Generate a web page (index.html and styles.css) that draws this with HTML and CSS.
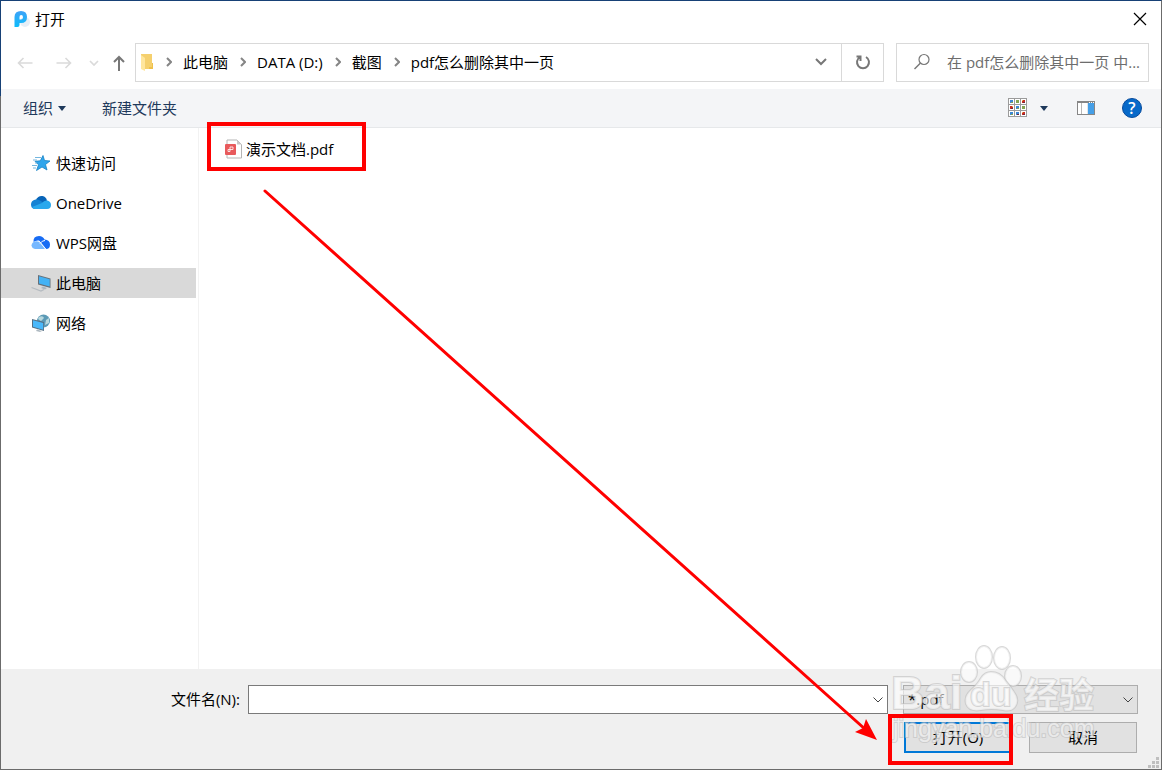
FILE: index.html
```html
<!DOCTYPE html>
<html lang="zh-CN">
<head>
<meta charset="utf-8">
<title>打开</title>
<link rel="stylesheet" href="styles.css">
</head>
<body>
<main class="dialog">
  <header class="titlebar">
    <svg class="logo" width="18" height="20" viewBox="0 0 18 20"><defs><linearGradient id="lg" x1="0" y1="0" x2="0" y2="1"><stop offset="0" stop-color="#3fa2f7"/><stop offset="1" stop-color="#0cbcfb"/></linearGradient></defs><circle cx="12" cy="13" r="5" fill="#e6eef6"/><path fill="url(#lg)" fill-rule="evenodd" d="M1.500 8Q1.500 2 8 2Q14 2 14 8Q14 14 8 14H6.500V16Q6.500 18 4.500 18H1.500ZM6.500 10.500H8Q10 10.500 10 8.200Q10 6 8.200 6Q6.500 6 6.500 8Z"/></svg>
    <h1 class="title">打开</h1>
    <button class="close" aria-label="关闭"><svg width="14" height="14" viewBox="0 0 14 14"><path d="M1 1L13 13M13 1L1 13" stroke="#000" stroke-width="1.200"/></svg></button>
  </header>

  <nav class="navrow">
    <div class="history">
      <button class="icon-btn back" aria-label="后退"><svg width="16" height="12" viewBox="0 0 16 12"><path d="M15.500 6H1.500M6.500 1L1.500 6L6.500 11" fill="none" stroke="#dadada" stroke-width="1.600"/></svg></button>
      <button class="icon-btn forward" aria-label="前进"><svg width="16" height="12" viewBox="0 0 16 12"><path d="M0.500 6H14.500M9.500 1L14.500 6L9.500 11" fill="none" stroke="#dadada" stroke-width="1.600"/></svg></button>
      <button class="icon-btn recent" aria-label="最近位置"><svg width="10" height="6" viewBox="0 0 10 6"><path d="M1 1L5 5L9 1" fill="none" stroke="#dadada" stroke-width="1.700"/></svg></button>
      <button class="icon-btn up" aria-label="上移"><svg width="14" height="16" viewBox="0 0 14 16"><path d="M7 16V2M2 7L7 2L12 7" fill="none" stroke="#777" stroke-width="2"/></svg></button>
    </div>
    <div class="address">
      <svg class="folder" width="14" height="18" viewBox="0 0 14 18"><path d="M1 1H12V10H13V16H1Z" fill="#f5d06e"/><path d="M12 10H13V16H9V14H12Z" fill="#efc14c"/><path d="M1 2L5 5V18L1 16Z" fill="#ffe69d"/></svg>
      <svg class="sep" width="6" height="10" viewBox="0 0 6 10"><path d="M1 1L5 5L1 9"/></svg>
      <a class="crumb" href="#pc">此电脑</a>
      <svg class="sep" width="6" height="10" viewBox="0 0 6 10"><path d="M1 1L5 5L1 9"/></svg>
      <a class="crumb" href="#data">DATA (D:)</a>
      <svg class="sep" width="6" height="10" viewBox="0 0 6 10"><path d="M1 1L5 5L1 9"/></svg>
      <a class="crumb" href="#shots">截图</a>
      <svg class="sep" width="6" height="10" viewBox="0 0 6 10"><path d="M1 1L5 5L1 9"/></svg>
      <a class="crumb" href="#folder">pdf怎么删除其中一页</a>
      <button class="drop" aria-label="以前的位置"><svg width="12" height="8" viewBox="0 0 12 8"><path d="M1 1L6 6L11 1" fill="none" stroke="#777" stroke-width="2"/></svg></button>
      <button class="refresh" aria-label="刷新"><svg width="16" height="16" viewBox="0 0 16 16"><path d="M11 3A6 6 0 1 1 5 3M1.500 2.500H5.500V7" fill="none" stroke="#777" stroke-width="2"/></svg></button>
    </div>
    <div class="search">
      <svg width="18" height="18" viewBox="0 0 18 18"><circle cx="11" cy="6.500" r="5" fill="none" stroke="#777" stroke-width="1.200"/><path d="M7.500 10L1.500 16" stroke="#777" stroke-width="1.400"/></svg>
      <input class="search-input" type="text" aria-label="搜索" placeholder="在 pdf怎么删除其中一页 中...">
    </div>
  </nav>

  <section class="toolbar">
    <button class="tool">组织<svg width="8" height="5" viewBox="0 0 8 5"><path d="M0 0H8L4 5Z" fill="#1e395b"/></svg></button>
    <button class="tool">新建文件夹</button>
    <div class="views">
      <button class="icon-btn view" aria-label="更改视图"><svg width="20" height="20" viewBox="0 0 20 20" shape-rendering="crispEdges"><path d="M0.500 0.500H18.500V18.500H0.500ZM6.500 0V19M12.500 0V19M0 6.500H19M0 12.500H19" fill="#fff" stroke="#9b9b9b"/><path fill="#3d87d3" d="M2 2h3v3H2zM8 8h3v3H8zM2 14h3v3H2zM8 14h3v3H8z"/><path fill="#83a551" d="M8 2h3v3H8zM14 8h3v3h-3zM3 4h2v1H3zM9 10h2v1H9zM3 16h2v1H3z"/><path fill="#c92d20" d="M14 2h3v3h-3zM2 8h3v3H2zM14 14h3v3h-3z"/><path fill="#e8b45d" d="M14 2h1v1h-1zM4 8h1v1H4zM14 14h1v1h-1z"/><path fill="#6d263d" d="M15 4h2v1h-2zM3 10h2v1H3zM15 16h2v1h-2zM9 16h2v1H9z"/></svg></button>
      <button class="icon-btn view-more" aria-label="更多选项"><svg width="8" height="5" viewBox="0 0 8 5"><path d="M0 0H8L4 5Z" fill="#1e395b"/></svg></button>
      <button class="icon-btn pane" aria-label="显示预览窗格"><svg width="18" height="14" viewBox="0 0 18 14" shape-rendering="crispEdges"><path d="M0 0H18V14H0Z" fill="#868686"/><path d="M1 2H10V13H1Z" fill="#fff"/><path d="M4 2H5V13H4Z" fill="#b8b8b8"/><path d="M10 2H11V13H10Z" fill="#dfe6ec"/><path d="M11 2H17V13H11Z" fill="#459fe7"/><path d="M12 1h1v1h-1zM14 1h1v1h-1zM16 1h1v1h-1z" fill="#fff"/></svg></button>
      <button class="icon-btn help" aria-label="帮助">?</button>
    </div>
  </section>

  <div class="body">
    <nav class="sidebar">
      <a class="place" href="#quick"><svg width="20" height="18" viewBox="0 0 20 18"><path d="M12 1.500L13.500 6.500L19 7L14.500 10.500L16 16L11 13L5.500 16.500L7.500 10.800L4 7.300L9.300 6.800Z" fill="#2ea5ec" stroke="#1681c4" stroke-width=".8"/><path d="M4 3.500H10M2 6H6M4 9H6M1 11.500H6M2 14H5" stroke="#74b6df" stroke-width="1"/></svg>快速访问</a>
      <a class="place" href="#onedrive"><svg width="20" height="18" viewBox="0 0 20 18"><path d="M5 6Q7 1.500 11.500 2Q15 2.500 16 6.500L10 11Z" fill="#0864b8"/><path d="M4.500 5.500Q7 5.200 9 6.500L15 10.500L3 15Q0 14 0 10.500Q0 6.500 4.500 5.500Z" fill="#1583d4"/><path d="M11 9Q13 6 16.500 6.500Q20 7.500 20 11Q20 15 16 15H4Q2 15 1 13Z" fill="#29a8ed"/></svg>OneDrive</a>
      <a class="place" href="#wps"><svg width="20" height="18" viewBox="0 0 20 18"><path d="M2.500 8Q2 2 8 2Q12 2 13.500 5.500Q19 6 19 10.500Q19 15 15 15L8 6.500Q5 6 2.500 8Z" fill="#176cf4"/><path d="M0.500 11.500Q1 7.500 5 7.200Q8 7 9.500 9L14 15H4Q1 14.500 0.500 11.500Z" fill="#76b8ff"/><path d="M9 9.500Q11 6.500 14 6.500" fill="none" stroke="#fff" stroke-width="1"/><path d="M8 7L14.800 15" stroke="#fff" stroke-width=".8"/></svg>WPS网盘</a>
      <a class="place current" href="#pc"><svg width="20" height="18" viewBox="0 0 20 18"><path d="M7 1L19.500 4.500V14L7 10.500Z" fill="#65707a"/><path d="M8 2.200L18.700 5.200V12.600L8 9.600Z" fill="#43b2f5"/><path d="M12 12.500L16 14L14 15.500L10 14Z" fill="#a9b5bf"/><path d="M0.500 13.500L10 17L13 15.500" fill="none" stroke="#b4bac0" stroke-width="1.200"/></svg>此电脑</a>
      <a class="place" href="#network"><svg width="20" height="18" viewBox="0 0 20 18"><circle cx="12.500" cy="7" r="6.500" fill="#5c9ab6"/><path d="M8 3Q12 1 13 4L10 7L7 5ZM15 6L18 4V9L14 11Z" fill="#b8d8de"/><path d="M1 5L13 8V17L1 13.500Z" fill="#556f83"/><path d="M2 6.300L12.200 8.900V15.800L2 12.800Z" fill="#49b8fa"/><path d="M6 15.500L11 17L9 18L5 17Z" fill="#adb8c0"/></svg>网络</a>
    </nav>
    <section class="files">
      <button class="file"><svg width="18" height="20" viewBox="0 0 18 20"><path d="M2 1H12L16.500 5.500V19H2Z" fill="#fff" stroke="#b5b5b5"/><path d="M12 1V5.500H16.500Z" fill="#c9c9c9"/><rect x="0" y="5" width="11" height="11" rx="1" fill="#e85a5c"/><path d="M3 10.500V12.500H5V8H8V10.500H3" fill="none" stroke="#fff" stroke-width=".8"/></svg>演示文档.pdf</button>
    </section>
  </div>

  <footer class="footer">
    <div class="fields">
      <label class="name-label" for="fname">文件名(N):</label>
      <div class="combo"><input id="fname" class="name-input" type="text"><svg class="chev" width="10" height="6" viewBox="0 0 10 6"><path d="M0.500 0.500L5 5L9.500 0.500"/></svg></div>
      <div class="combo type"><select class="filter" aria-label="文件类型"><option>*.pdf</option></select><svg class="chev" width="10" height="6" viewBox="0 0 10 6"><path d="M0.500 0.500L5 5L9.500 0.500"/></svg></div>
    </div>
    <div class="actions">
      <button class="btn primary">打开(O)</button>
      <button class="btn">取消</button>
    </div>
    <svg class="grip" width="11" height="11" viewBox="0 0 11 11"><path fill="#bfbfbf" d="M8 0h3v3H8zM4 4h3v3H4zM8 4h3v3H8zM0 8h3v3H0zM4 8h3v3H4zM8 8h3v3H8z"/></svg>
    <svg class="watermark" width="220" height="110" viewBox="0 0 220 110" aria-hidden="true">
      <g class="wm-shape"><ellipse cx="83" cy="37" rx="8" ry="10"/><ellipse cx="98" cy="22" rx="8" ry="11"/><ellipse cx="116" cy="23" rx="8" ry="11"/><ellipse cx="127" cy="41" rx="8" ry="10"/><path d="M105 37Q114 37 119 45Q124 51 128 57Q134 65 129 72Q125 77 117 75Q105 73 95 75Q83 77 80 69Q78 61 85 55Q92 49 95 43Q99 37 105 37Z"/></g>
      <text class="wm-big" x="5" y="74">Bai</text>
      <text class="wm-du" x="84" y="71">du</text>
      <text class="wm-cjk" x="138" y="73">经验</text>
      <text class="wm-url" x="7" y="102">jingyan.baidu.com</text>
    </svg>
  </footer>

  <svg class="marks" viewBox="0 0 1162 770" preserveAspectRatio="none" aria-hidden="true">
    <path d="M209 124H364V169H209ZM890 716H1011V763H890Z" fill="none" stroke="#f00" stroke-width="4"/>
    <path d="M265 191L866 730" stroke="#f00" stroke-width="3" stroke-linecap="round"/>
    <path d="M877 740L855 732L863 728L866 719Z" fill="#f00"/>
  </svg>
</main>
</body>
</html>
```
FILE: styles.css
```css
* { box-sizing: border-box; }
body {
  margin: 0;
  font: 15px/20px "Open Sans", "Noto Sans CJK SC", sans-serif;
  color: #000;
}
button, input, select { font: inherit; color: inherit; }
button { border: 0; padding: 0; background: none; }
a { color: inherit; text-decoration: none; }
svg { display: block; flex: none; }

.dialog {
  position: relative;
  display: flex;
  flex-direction: column;
  min-height: 100vh;
  background: #fff;
  border: 1px solid #6b6b6b;
  border-top-color: #174176;
}
.dialog::before {
  content: "";
  position: absolute;
  left: -1px;
  top: -1px;
  width: 1px;
  height: 96px;
  background: #174176;
}

.titlebar { display: flex; align-items: center; height: 36px; padding: 0 14px 0 12px; }
.title { margin: 0 auto 0 4px; font-size: 15px; font-weight: 400; }

.navrow { display: flex; align-items: center; height: 52px; padding: 0 12px 2px 0; }
.icon-btn { display: flex; align-items: center; justify-content: center; }
.history { display: flex; align-items: center; width: 134px; padding: 2px 0 0 16px; }
.forward { margin-left: 23px; }
.recent { margin-left: 17px; }
.up { margin-left: 13px; }
.address { display: flex; flex: 1; align-items: center; height: 39px; border: 1px solid #d9d9d9; padding-left: 4px; white-space: nowrap; }
.sep { margin: 0 11px; fill: none; stroke: #858585; stroke-width: 2; }
.folder + .sep { margin-left: 12px; }
.crumb + .sep { margin-left: 12px; }
.drop { display: flex; margin-left: auto; padding: 12px 14px; }
.refresh { display: flex; align-items: center; justify-content: center; align-self: stretch; width: 42px; border-left: 1px solid #d9d9d9; }
.search { display: flex; align-items: center; width: 253px; height: 39px; margin-left: 12px; padding-left: 16px; border: 1px solid #d9d9d9; }
.search-input { flex: 1; min-width: 0; margin-left: 16px; border: 0; padding: 0; outline: 0; background: none; }
.search-input::placeholder { color: #6d6d6d; opacity: 1; }

.toolbar { display: flex; align-items: center; height: 39px; padding: 0 19px 0 22px; background: #f4f5f7; border-bottom: 1px solid #e6e8ea; color: #1e395b; }
.tool { display: flex; align-items: center; gap: 5px; margin-right: 36px; }
.views { display: flex; align-items: center; margin-left: auto; }
.view-more { margin-left: 12px; }
.pane { margin-left: 29px; }
.help { width: 20px; height: 20px; margin-left: 27px; border: 1px solid #064a9c; border-radius: 50%; background: #0769c9; color: #fff; font-size: 16px; font-weight: 600; line-height: 18px; }

.body { display: flex; flex: 1; }
.sidebar { display: flex; flex-direction: column; gap: 10px; width: 198px; padding: 20px 2px 0 0; border-right: 1px solid #f2f2f2; }
.place { display: flex; align-items: center; gap: 5px; height: 30px; padding-left: 30px; }
.current { background: #d9d9d9; }
.files { flex: 1; padding: 11px 26px; }
.file { display: flex; align-items: center; gap: 3px; }

.footer { position: relative; height: 100px; padding: 16px 23px 0 0; background: #f0f0f0; }
.fields { display: flex; align-items: center; }
.name-label { width: 247px; padding: 0 8px 2px 0; text-align: right; }
.combo { position: relative; flex: 1; height: 29px; }
.type { flex: none; width: 235px; margin-left: 15px; }
.name-input { display: block; width: 100%; height: 29px; border: 1px solid #7a7a7a; background: #fff; outline: 0; }
.filter { display: block; width: 100%; height: 29px; padding: 0 4px 2px; border: 1px solid #adadad; border-radius: 0; background: #e1e1e1; appearance: none; }
.chev { position: absolute; right: 5px; top: 12px; fill: none; stroke: #444; pointer-events: none; }
.actions { display: flex; justify-content: flex-end; gap: 17px; margin: 8px 1px 0 0; }
.btn { width: 108px; height: 31px; padding-bottom: 2px; border: 1px solid #adadad; background: #e1e1e1; }
.primary { border: 2px solid #0078d7; }
.grip { position: absolute; right: 2px; bottom: 1px; }

.watermark { position: absolute; right: 55px; top: -34px; pointer-events: none; }
.wm-shape, .wm-big, .wm-du, .wm-cjk, .wm-url { fill: rgba(255, 255, 255, .6); stroke: rgba(190, 190, 190, .6); stroke-width: 2px; paint-order: stroke; }
.wm-big { font: 700 46px "Liberation Sans", sans-serif; }
.wm-du { font: 700 34px "Liberation Sans", sans-serif; }
.wm-cjk { font: 700 35px "Noto Sans CJK SC", sans-serif; }
.wm-url { font: 400 25px "Liberation Sans", sans-serif; }
.marks { position: absolute; left: -1px; top: -1px; width: calc(100% + 2px); height: calc(100% + 2px); pointer-events: none; }
```
